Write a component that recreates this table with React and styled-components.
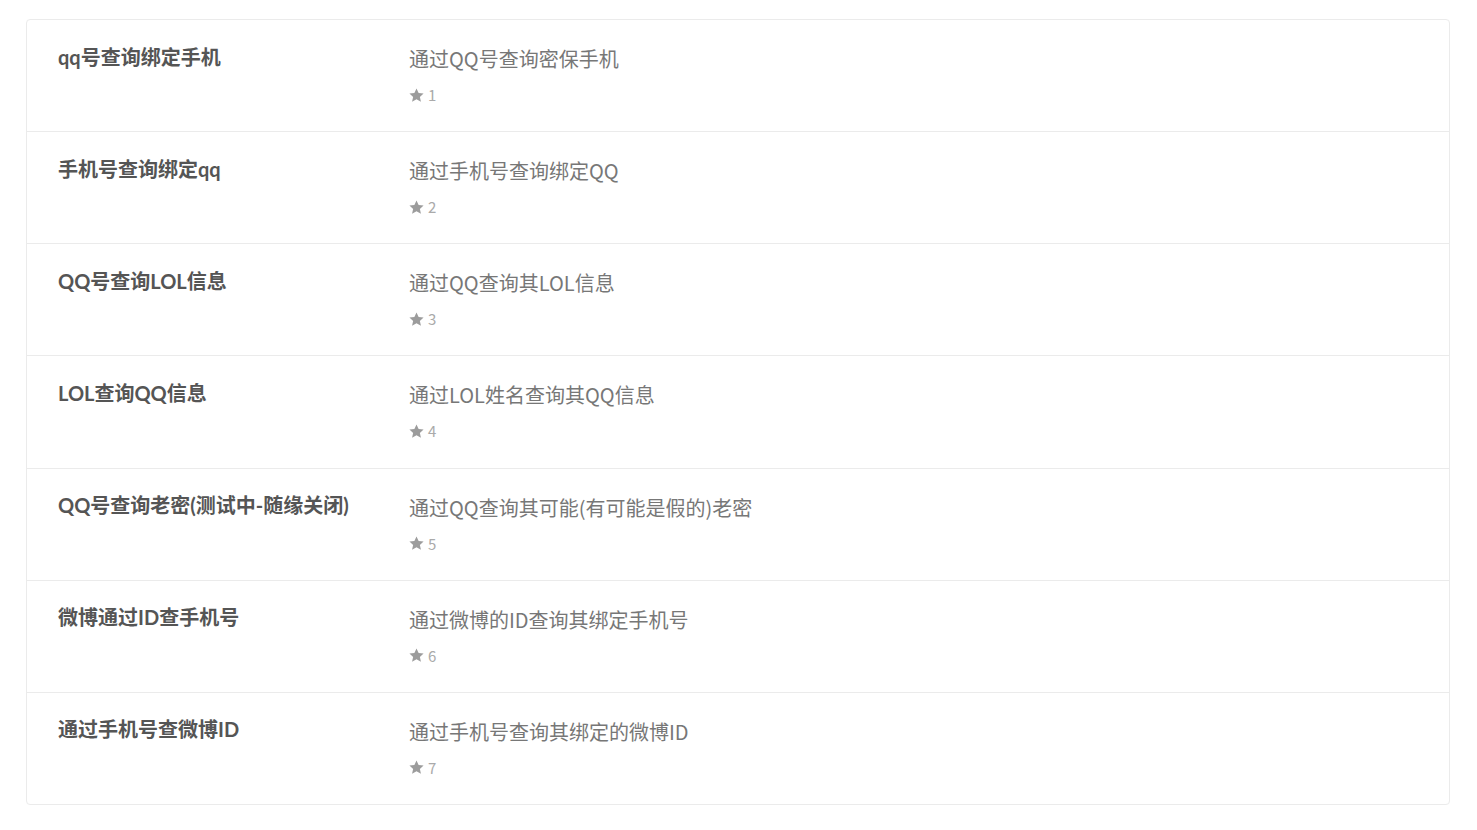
import React from "react";
import styled, { createGlobalStyle } from "styled-components";

const GlobalStyle = createGlobalStyle`
	html, body {
		margin: 0;
		padding: 0;
		background: #fff;
	}
	body {
		font-family: "Noto Sans CJK SC", sans-serif;
	}
`;

const items = [
	{ id: 1, title: "qq号查询绑定手机", desc: "通过QQ号查询密保手机" },
	{ id: 2, title: "手机号查询绑定qq", desc: "通过手机号查询绑定QQ" },
	{ id: 3, title: "QQ号查询LOL信息", desc: "通过QQ查询其LOL信息" },
	{ id: 4, title: "LOL查询QQ信息", desc: "通过LOL姓名查询其QQ信息" },
	{ id: 5, title: "QQ号查询老密(测试中-随缘关闭)", desc: "通过QQ查询其可能(有可能是假的)老密" },
	{ id: 6, title: "微博通过ID查手机号", desc: "通过微博的ID查询其绑定手机号" },
	{ id: 7, title: "通过手机号查微博ID", desc: "通过手机号查询其绑定的微博ID" }
];

const StarIcon = () => (
	<svg width="15" height="15" viewBox="0 0 24 24" aria-hidden="true">
		<path
			fill="currentColor"
			d="M12 .8l3.4 7.2 7.9.9-5.9 5.4 1.7 7.8L12 18.1l-7.1 4 1.7-7.8L.7 8.9l7.9-.9z"
		/>
	</svg>
);

const App = () => (
	<Page>
		<GlobalStyle />
		<Card>
			{ items.map((item) => (
				<Row key={ item.id }>
					<Title>{ item.title }</Title>
					<Body>
						<Desc>{ item.desc }</Desc>
						<Meta>
							<StarIcon />
							<Count>{ item.id }</Count>
						</Meta>
					</Body>
				</Row>
			)) }
		</Card>
	</Page>
);

const Page = styled.div`
	padding: 19px 27px 24px 26px;
`;

const Card = styled.div`
	border: 1px solid #ebebeb;
	border-radius: 4px;
	background: #fff;
`;

const Row = styled.div`
	display: grid;
	grid-template-columns: 351px 1fr;
	padding: 22.5px 31px 26.17px;
	border-bottom: 1px solid #ebebeb;

	&:last-child {
		border-bottom: none;
	}
`;

const Title = styled.div`
	font-family: "Lato", "Noto Sans CJK SC", sans-serif;
	font-size: 20px;
	line-height: 28px;
	font-weight: 700;
	color: #555;
	white-space: nowrap;
`;

const Body = styled.div`
	display: flex;
	flex-direction: column;
`;

const Desc = styled.div`
	margin-top: 2.5px;
	font-family: "Noto Sans CJK SC", sans-serif;
	font-size: 20px;
	line-height: 28px;
	font-weight: 400;
	color: #777;
`;

const Meta = styled.div`
	margin-top: 12px;
	display: flex;
	align-items: center;
	gap: 4px;
	height: 20px;
	color: #9c9c9c;
`;

const Count = styled.span`
	font-family: "Noto Sans CJK SC", sans-serif;
	font-size: 15px;
	line-height: 20px;
	color: #aaa;
`;

export default App;
